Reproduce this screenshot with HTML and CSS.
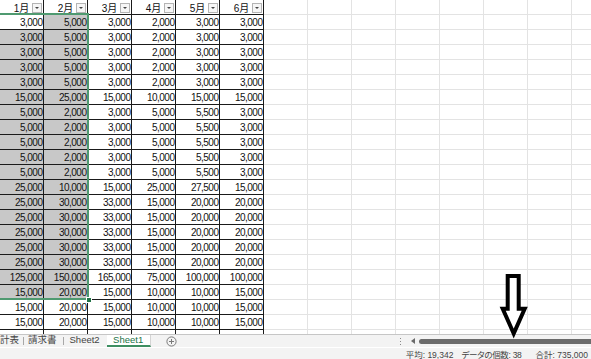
FILE: index.html
```html
<!DOCTYPE html>
<html lang="ja">
<head>
<meta charset="utf-8">
<link rel="stylesheet" href="styles.css">
</head>
<body>
<div class="app">
  <div class="sheet">
    <div class="grid">
      <div class="hd">1月<span class="fbtn"></span></div>
      <div class="hd">2月<span class="fbtn"></span></div>
      <div class="hd">3月<span class="fbtn"></span></div>
      <div class="hd">4月<span class="fbtn"></span></div>
      <div class="hd">5月<span class="fbtn"></span></div>
      <div class="hd">6月<span class="fbtn"></span></div>

      <div class="c">3,000</div><div class="c s">5,000</div><div class="c">3,000</div><div class="c">2,000</div><div class="c">3,000</div><div class="c">3,000</div>
      <div class="c s">3,000</div><div class="c s">5,000</div><div class="c">3,000</div><div class="c">2,000</div><div class="c">3,000</div><div class="c">3,000</div>
      <div class="c s">3,000</div><div class="c s">5,000</div><div class="c">3,000</div><div class="c">2,000</div><div class="c">3,000</div><div class="c">3,000</div>
      <div class="c s">3,000</div><div class="c s">5,000</div><div class="c">3,000</div><div class="c">2,000</div><div class="c">3,000</div><div class="c">3,000</div>
      <div class="c s">3,000</div><div class="c s">5,000</div><div class="c">3,000</div><div class="c">2,000</div><div class="c">3,000</div><div class="c">3,000</div>
      <div class="c s">15,000</div><div class="c s">25,000</div><div class="c">15,000</div><div class="c">10,000</div><div class="c">15,000</div><div class="c">15,000</div>
      <div class="c s">5,000</div><div class="c s">2,000</div><div class="c">3,000</div><div class="c">5,000</div><div class="c">5,500</div><div class="c">3,000</div>
      <div class="c s">5,000</div><div class="c s">2,000</div><div class="c">3,000</div><div class="c">5,000</div><div class="c">5,500</div><div class="c">3,000</div>
      <div class="c s">5,000</div><div class="c s">2,000</div><div class="c">3,000</div><div class="c">5,000</div><div class="c">5,500</div><div class="c">3,000</div>
      <div class="c s">5,000</div><div class="c s">2,000</div><div class="c">3,000</div><div class="c">5,000</div><div class="c">5,500</div><div class="c">3,000</div>
      <div class="c s">5,000</div><div class="c s">2,000</div><div class="c">3,000</div><div class="c">5,000</div><div class="c">5,500</div><div class="c">3,000</div>
      <div class="c s">25,000</div><div class="c s">10,000</div><div class="c">15,000</div><div class="c">25,000</div><div class="c">27,500</div><div class="c">15,000</div>
      <div class="c s">25,000</div><div class="c s">30,000</div><div class="c">33,000</div><div class="c">15,000</div><div class="c">20,000</div><div class="c">20,000</div>
      <div class="c s">25,000</div><div class="c s">30,000</div><div class="c">33,000</div><div class="c">15,000</div><div class="c">20,000</div><div class="c">20,000</div>
      <div class="c s">25,000</div><div class="c s">30,000</div><div class="c">33,000</div><div class="c">15,000</div><div class="c">20,000</div><div class="c">20,000</div>
      <div class="c s">25,000</div><div class="c s">30,000</div><div class="c">33,000</div><div class="c">15,000</div><div class="c">20,000</div><div class="c">20,000</div>
      <div class="c s">25,000</div><div class="c s">30,000</div><div class="c">33,000</div><div class="c">15,000</div><div class="c">20,000</div><div class="c">20,000</div>
      <div class="c s">125,000</div><div class="c s">150,000</div><div class="c">165,000</div><div class="c">75,000</div><div class="c">100,000</div><div class="c">100,000</div>
      <div class="c s">15,000</div><div class="c s">20,000</div><div class="c">15,000</div><div class="c">10,000</div><div class="c">10,000</div><div class="c">15,000</div>
      <div class="c">15,000</div><div class="c">20,000</div><div class="c">15,000</div><div class="c">10,000</div><div class="c">10,000</div><div class="c">15,000</div>
      <div class="c">15,000</div><div class="c">20,000</div><div class="c">15,000</div><div class="c">10,000</div><div class="c">10,000</div><div class="c">15,000</div>
      <div class="c"></div><div class="c"></div><div class="c"></div><div class="c"></div><div class="c"></div><div class="c"></div>
    </div>
    <div class="selbox"><span class="handle"></span></div>
  </div>

  <div class="tabbar">
    <div class="tabs">
      <span class="tab t1">計表</span>
      <span class="sep"></span>
      <span class="tab t2">請求書</span>
      <span class="sep"></span>
      <span class="tab t3">Sheet2</span>
      <span class="tab active">Sheet1</span>
      <svg class="add" width="11" height="11" viewBox="0 0 11 11">
        <circle cx="5.5" cy="5.5" r="4.6" fill="none" stroke="#7a7a7a" stroke-width="1"/>
        <path d="M5.5 3v5M3 5.5h5" stroke="#7a7a7a" stroke-width="1"/>
      </svg>
    </div>
    <div class="hs">
      <span class="dots"></span>
      <span class="larrow"></span>
      <span class="thumb"></span>
    </div>
  </div>

  <div class="status">
    <span class="st st1">平均: 19,342</span>
    <span class="st st2">データの個数: 38</span>
    <span class="st st3">合計: 735,000</span>
  </div>

  <svg class="arrow" width="34" height="72" viewBox="0 0 34 72">
    <path d="M11.7 6 H22.7 V38.7 H28.7 L17.7 63.5 L6.7 38.7 H11.7 Z" fill="#fff" stroke="#000" stroke-width="4" stroke-linejoin="miter" stroke-miterlimit="10"/>
  </svg>
</div>
</body>
</html>
```

FILE: styles.css
```css
* { box-sizing: border-box; }

html, body {
  margin: 0;
  padding: 0;
  background: #fff;
}

body {
  width: 591px;
  height: 359px;
  overflow: hidden;
  font-family: "Liberation Sans", "Noto Sans CJK JP", sans-serif;
  color: #111;
}

.app {
  position: relative;
  width: 591px;
  height: 359px;
  overflow: hidden;
}

.sheet {
  position: relative;
  height: 334px;
  overflow: hidden;
  background-color: #fff;
  background-image:
    linear-gradient(to right, transparent 43px, #e3e3e3 43px, #e3e3e3 44px),
    linear-gradient(to bottom, transparent 14px, #e3e3e3 14px, #e3e3e3 15px);
  background-size: 44px 100%, 100% 15px;
  background-repeat: repeat-x, repeat-y;
}

.grid {
  display: grid;
  grid-template-columns: repeat(6, 44px);
  grid-auto-rows: 15px;
  width: 264px;
}

.hd {
  position: relative;
  background: #fff;
  border-right: 1px solid #1a1a1a;
  border-bottom: 1px solid #1a1a1a;
  font-size: 10px;
  line-height: 11px;
  padding-top: 3px;
  text-align: center;
  color: #111;
}

.fbtn {
  position: absolute;
  right: 1px;
  top: 3px;
  width: 10px;
  height: 10px;
  border: 1px solid #b4b4b4;
  background: #f6f6f6;
}

.fbtn::after {
  content: "";
  position: absolute;
  left: 2px;
  top: 3px;
  border-left: 2px solid transparent;
  border-right: 2px solid transparent;
  border-top: 2px solid #444;
}

.c {
  background: #fff;
  border-right: 1px solid #1a1a1a;
  border-bottom: 1px solid #1a1a1a;
  font-size: 10px;
  letter-spacing: -0.5px;
  line-height: 12px;
  padding: 2px 0.5px 0 0;
  text-align: right;
  white-space: nowrap;
  overflow: hidden;
}

.c.s {
  background: #c8c8c8;
}

.selbox {
  position: absolute;
  left: -6px;
  top: 13px;
  width: 95px;
  height: 287px;
  border: 2px solid #4f9a70;
  pointer-events: none;
}

.handle {
  position: absolute;
  right: -5px;
  bottom: -5px;
  width: 6px;
  height: 6px;
  background: #217346;
  border: 1px solid #fff;
}

.tabbar {
  display: flex;
  height: 13px;
  border-top: 1px solid #c6c6c6;
  background: #f3f3f3;
  font-size: 9.5px;
  color: #444;
}

.tabs {
  display: flex;
  align-items: flex-start;
  width: 396px;
  flex: 0 0 396px;
}

.tab {
  line-height: 10px;
  height: 12px;
  white-space: nowrap;
}

.t1 { padding: 0 4px 0 0; }
.t2 { padding: 0 6px 0 4px; }
.t3 { padding: 0 7px 0 6px; }

.sep {
  width: 1px;
  height: 8px;
  margin-top: 2px;
  background: #a8a8a8;
}

.tab.active {
  width: 44px;
  text-align: center;
  background: #fff;
  color: #217346;
  border-bottom: 2px solid #3e8f62;
  border-right: 1px solid #d4d4d4;
}

.add {
  margin-left: 15px;
  margin-top: 1px;
}

.hs {
  display: flex;
  align-items: center;
  flex: 1;
  height: 12px;
}

.dots {
  width: 1px;
  height: 1px;
  margin-left: 4px;
  margin-top: -6px;
  background: #8a8a8a;
  box-shadow: 0 3px 0 #8a8a8a, 0 6px 0 #8a8a8a;
}

.larrow {
  width: 0;
  height: 0;
  margin-left: 10px;
  border-right: 4px solid #6a6a6a;
  border-top: 3px solid transparent;
  border-bottom: 3px solid transparent;
}

.thumb {
  flex: 1;
  height: 5px;
  margin-left: 4px;
  margin-right: -6px;
  background: #6b6b6b;
  border-radius: 3px;
}

.status {
  display: flex;
  justify-content: flex-end;
  height: 12px;
  border-top: 1px solid #ffffff;
  background: #f3f3f3;
  padding-right: 3px;
  padding-top: 3px;
  font-size: 8.5px;
  line-height: 8px;
  color: #444;
  white-space: nowrap;
  font-feature-settings: "palt";
}

.st { display: block; }
.st2 { margin-left: 8px; letter-spacing: -0.3px; }
.st3 { margin-left: 14px; }

.arrow {
  position: absolute;
  left: 496px;
  top: 270px;
}
```
